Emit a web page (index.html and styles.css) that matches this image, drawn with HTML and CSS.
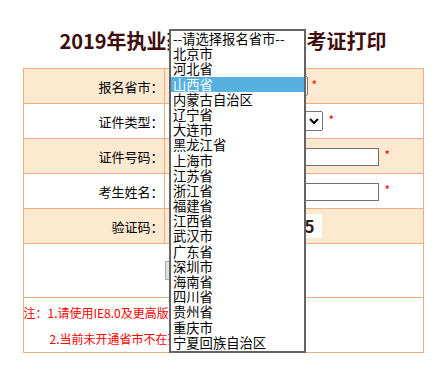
FILE: index.html
```html
<!DOCTYPE html>
<html lang="zh-CN">
<head>
    <meta charset="UTF-8">
    <title>准考证打印</title>
    <link rel="stylesheet" href="styles.css">
</head>
<body>
    <h1 class="title">2019年执业药师资格考试准考证打印</h1>

    <table class="form-table">
        <tr class="shade">
            <td class="label">报名省市：</td>
            <td class="value"><select class="sel sel-province"><option>--请选择报名省市--</option></select><span class="req near">*</span></td>
        </tr>
        <tr>
            <td class="label">证件类型：</td>
            <td class="value"><select class="sel sel-type"><option>身份证</option></select><span class="req">*</span></td>
        </tr>
        <tr class="shade">
            <td class="label">证件号码：</td>
            <td class="value"><input class="txt" type="text"><span class="req">*</span></td>
        </tr>
        <tr>
            <td class="label">考生姓名：</td>
            <td class="value"><input class="txt" type="text"><span class="req">*</span></td>
        </tr>
        <tr class="shade">
            <td class="label">验证码：</td>
            <td class="value"><input class="txt code" type="text"><span class="captcha">5</span></td>
        </tr>
        <tr>
            <td class="actions" colspan="2"><button class="btn">打印准考证</button></td>
        </tr>
        <tr>
            <td class="notes" colspan="2">
                <div class="note-line"><span class="note-head">注：</span>1.请使用IE8.0及更高版本浏览器</div>
                <div class="note-line indent">2.当前未开通省市不在列表中</div>
            </td>
        </tr>
    </table>

    <!-- opened list of the province select -->
    <div class="listbox">
        <div class="opt">--请选择报名省市--</div>
        <div class="opt">北京市</div>
        <div class="opt">河北省</div>
        <div class="opt active">山西省</div>
        <div class="opt">内蒙古自治区</div>
        <div class="opt">辽宁省</div>
        <div class="opt">大连市</div>
        <div class="opt">黑龙江省</div>
        <div class="opt">上海市</div>
        <div class="opt">江苏省</div>
        <div class="opt">浙江省</div>
        <div class="opt">福建省</div>
        <div class="opt">江西省</div>
        <div class="opt">武汉市</div>
        <div class="opt">广东省</div>
        <div class="opt">深圳市</div>
        <div class="opt">海南省</div>
        <div class="opt">四川省</div>
        <div class="opt">贵州省</div>
        <div class="opt">重庆市</div>
        <div class="opt">宁夏回族自治区</div>
    </div>
</body>
</html>
```

FILE: styles.css
```css
body {
    margin: 0;
    padding: 0;
    background-color: #ffffff;
    font-family: "Noto Sans CJK SC", "Liberation Sans", sans-serif;
    color: #000000;
    position: relative;
}
.title {
    margin: 27px 0 13px;
    font-size: 20px;
    line-height: 28px;
    font-weight: bold;
    text-align: center;
    color: #3e0d0e;
}
.form-table {
    width: 401px;
    margin: 0 auto;
    border-collapse: collapse;
}
.form-table td {
    border: 1px solid #eaae82;
    height: 34px;
    padding: 0;
    font-size: 12px;
}
.form-table .shade td {
    background-color: #fde9d0;
}
.form-table .label {
    width: 140px;
    text-align: right;
    font-size: 13px;
}
.form-table .value {
    padding-left: 6px;
}
.sel {
    font-size: 13px;
    height: 20px;
    vertical-align: middle;
}
.sel-province {
    width: 137px;
}
.sel-type {
    width: 152px;
}
.txt {
    box-sizing: border-box;
    width: 208px;
    height: 18px;
    border: 1px solid #707070;
    padding: 0 2px;
    vertical-align: middle;
}
.txt.code {
    width: 65px;
}
.captcha {
    display: inline-block;
    width: 80px;
    height: 24px;
    margin-left: 6px;
    background-color: #ffffff;
    color: #2e1a12;
    font-size: 17px;
    font-weight: bold;
    line-height: 24px;
    text-align: right;
    padding-right: 7px;
    box-sizing: border-box;
    vertical-align: middle;
}
.req {
    color: #ff0000;
    margin-left: 6px;
    font-size: 12px;
}
.req.near {
    margin-left: 4px;
}
.actions {
    text-align: center;
}
.form-table .actions {
    height: 53px;
}
.btn {
    font-size: 12px;
    height: 19px;
    width: 116px;
    padding: 0;
    background-color: #e1e1e1;
    border: 1px solid #adadad;
}
.form-table .notes {
    height: 52px;
    color: #ff0000;
    font-size: 12px;
    padding-top: 2px;
    vertical-align: top;
}
.note-line {
    line-height: 26px;
    white-space: nowrap;
}
.note-line.indent {
    padding-left: 26px;
}
.listbox {
    position: absolute;
    left: 169px;
    top: 29px;
    width: 133px;
    height: 320px;
    border: 2px solid #646464;
    border-bottom-width: 3px;
    background-color: #ffffff;
    overflow: hidden;
}
.opt {
    height: 15.2px;
    line-height: 15.2px;
    padding-left: 2px;
    font-size: 13.3px;
    white-space: nowrap;
}
.opt.active {
    background-color: #57b0e0;
    color: #ffffff;
}
```
